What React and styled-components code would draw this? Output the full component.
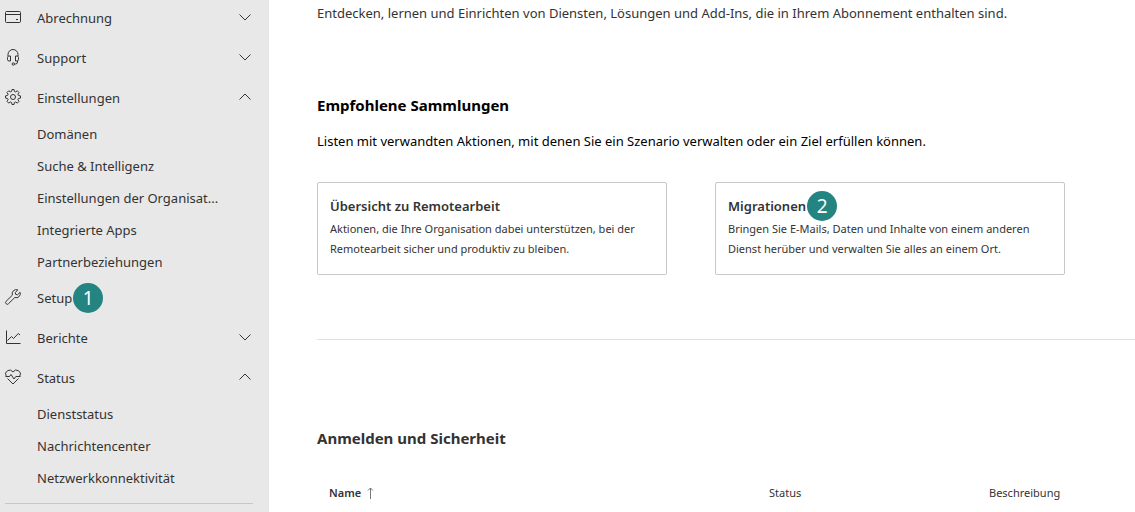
import styled, { createGlobalStyle, css } from "styled-components";

const GlobalStyle = createGlobalStyle`
  * {
    box-sizing: border-box;
  }
  html, body, #root {
    height: 100%;
  }
  body {
    margin: 0;
    overflow: hidden;
    background: #fff;
    color: #333;
    font-family: "Noto Sans", "Open Sans", sans-serif;
    font-size: 13px;
    line-height: 20px;
  }
  h2, h3, p, ul {
    margin: 0;
    padding: 0;
  }
`;

const icons = {
  billing: (
    <>
      <rect x="0.5" y="2.5" width="15" height="11" rx="1" />
      <path d="M0.5 5.5h15M11 10.5h2" />
    </>
  ),
  support: (
    <>
      <path d="M3 7V5.500a5 5 0 0 1 10 0V7" />
      <path d="M5.500 7v5H4a1.500 1.500 0 0 1-1.500-1.500v-2A1.500 1.500 0 0 1 4 7zM10.500 7v5H12a1.500 1.500 0 0 0 1.500-1.500v-2A1.500 1.500 0 0 0 12 7z" />
      <path d="M12.500 12v1a2 2 0 0 1-2 2H9.500" />
      <circle cx="8.300" cy="15" r="1.200" />
    </>
  ),
  settings: (
    <>
      <circle cx="8" cy="8" r="2.500" />
      <path d="M7 .5h2l.4 1.900 1.200.5 1.700-1.100 1.700 1.700-1.100 1.700.5 1.200 2.100.5v2.200l-2.100.4-.5 1.200 1.100 1.700-1.700 1.700-1.700-1.100-1.200.5L9 15.500H7l-.4-2-1.200-.5-1.700 1.100L2 12.400l1.100-1.700-.5-1.200L.5 9.100V6.900l2.100-.5.5-1.200L2 3.500l1.700-1.700 1.700 1.100 1.200-.5z" />
    </>
  ),
  setup: (
    <path d="M12.800 0.900a4.100 4.100 0 0 0-5.400 5.200L1.100 12.300a1.600 1.600 0 0 0 0 2.400 1.600 1.600 0 0 0 2.400 0l6.300-6.200a4.100 4.100 0 0 0 5.300-5.200l-2.600 2.500-1.800-.4-.4-1.900z" />
  ),
  reports: <path d="M1.500 1.500v13H15.500M2.500 11.500l4-4 2 2 4.800-5 1.700 1.500" />,
  health: (
    <>
      <path d="M1.200 7.200A3.900 3.900 0 0 1 8 3a3.900 3.900 0 0 1 6.800 4.200M2.500 9.500L8 15l5.500-5.500" />
      <path d="M0.500 7.500h4l1.500-2 3 4.500 1.800-2.500h4.700" />
    </>
  ),
  down: <path d="M2.500 5.500l5.500 5.500 5.500-5.500" />,
  up: <path d="M2.500 10.500L8 5l5.500 5.500" />,
  sort: <path d="M7.500 15V4M5 6.500L7.500 4 10 6.500" />,
};

const Icon = ({ name }) => (
  <Svg viewBox="0 1 16 16" aria-hidden="true">
    {icons[name]}
  </Svg>
);

const menu = [
  { label: "Abrechnung", icon: "billing", arrow: "down" },
  { label: "Support", icon: "support", arrow: "down" },
  {
    label: "Einstellungen",
    icon: "settings",
    arrow: "up",
    items: [
      "Domänen",
      "Suche & Intelligenz",
      "Einstellungen der Organisat...",
      "Integrierte Apps",
      "Partnerbeziehungen",
    ],
  },
  { label: "Setup", icon: "setup", step: 1 },
  { label: "Berichte", icon: "reports", arrow: "down" },
  {
    label: "Status",
    icon: "health",
    arrow: "up",
    items: ["Dienststatus", "Nachrichtencenter", "Netzwerkkonnektivität"],
  },
];

const MenuEntry = ({ label, icon, arrow, step, items }) => (
  <li>
    {arrow ? (
      <MenuButton type="button" aria-expanded={arrow === "up"}>
        <Icon name={icon} />
        <MenuLabel>{label}</MenuLabel>
        <Icon name={arrow} />
      </MenuButton>
    ) : (
      <MenuLink href="#setup">
        <Icon name={icon} />
        <Anchor>
          {label}
          {step && <Step>{step}</Step>}
        </Anchor>
      </MenuLink>
    )}
    {items && (
      <List>
        {items.map((item) => (
          <li key={item}>
            <SubLink href="#">{item}</SubLink>
          </li>
        ))}
      </List>
    )}
  </li>
);

const Collection = ({ title, text, step }) => (
  <Card href="#">
    <CardTitle>
      <Anchor>
        {title}
        {step && <Step>{step}</Step>}
      </Anchor>
    </CardTitle>
    <CardText>{text}</CardText>
  </Card>
);

export default function App() {
  return (
    <Page>
      <GlobalStyle />
      <Sidebar>
        <List>
          {menu.map((entry) => (
            <MenuEntry key={entry.label} {...entry} />
          ))}
        </List>
        <SidebarRule />
      </Sidebar>
      <Main>
        <Paragraph>
          Entdecken, lernen und Einrichten von Diensten, Lösungen und Add-Ins,
          die in Ihrem Abonnement enthalten sind.
        </Paragraph>
        <Collections>
          <Heading $dark>Empfohlene Sammlungen</Heading>
          <Paragraph $dark>
            Listen mit verwandten Aktionen, mit denen Sie ein Szenario verwalten
            oder ein Ziel erfüllen können.
          </Paragraph>
          <Cards>
            <Collection
              title="Übersicht zu Remotearbeit"
              text="Aktionen, die Ihre Organisation dabei unterstützen, bei der Remotearbeit sicher und produktiv zu bleiben."
            />
            <Collection
              title="Migrationen"
              step={2}
              text="Bringen Sie E-Mails, Daten und Inhalte von einem anderen Dienst herüber und verwalten Sie alles an einem Ort."
            />
          </Cards>
        </Collections>
        <Security>
          <Heading>Anmelden und Sicherheit</Heading>
          <Table>
            <thead>
              <tr>
                <Th $width="440px" $strong aria-sort="ascending">
                  <SortButton type="button">
                    Name
                    <Icon name="sort" />
                  </SortButton>
                </Th>
                <Th $width="220px">Status</Th>
                <Th>Beschreibung</Th>
              </tr>
            </thead>
          </Table>
        </Security>
      </Main>
    </Page>
  );
}

const Page = styled.div`
  display: flex;
  height: 100%;
  overflow: hidden;
`;
const Svg = styled.svg`
  flex: none;
  width: 16px;
  height: 16px;
  overflow: visible;
  fill: none;
  stroke: currentColor;
  stroke-width: 1;
`;
const Sidebar = styled.nav`
  flex: 0 0 269px;
  margin-top: -2px;
  background: #e8e8e8;
`;
const List = styled.ul`
  list-style: none;
`;
const menuRow = css`
  display: flex;
  align-items: center;
  gap: 16px;
  width: 100%;
  height: 40px;
  padding: 0 16px 0 5px;
  border: 0;
  background: transparent;
  color: #333;
  font: inherit;
  text-align: left;
  text-decoration: none;
  cursor: pointer;
`;
const MenuButton = styled.button`
  ${menuRow}
`;
const MenuLink = styled.a`
  ${menuRow}
`;
const MenuLabel = styled.span`
  flex: 1;
`;
const SubLink = styled.a`
  display: block;
  padding: 6px 16px 6px 37px;
  color: #333;
  text-decoration: none;
  white-space: nowrap;
`;
const SidebarRule = styled.hr`
  margin: 9px 16px 0 5px;
  border: 0;
  border-top: 1px solid #c8c8c8;
`;
const Anchor = styled.span`
  position: relative;
`;
/* Numbered marker laid over the end of a label */
const Step = styled.span`
  position: absolute;
  top: 50%;
  left: 100%;
  display: flex;
  align-items: center;
  justify-content: center;
  width: 30px;
  height: 30px;
  margin-left: 1px;
  border-radius: 50%;
  background: #248481;
  color: #fff;
  font-size: 19px;
  font-weight: 400;
  transform: translateY(-50%);
`;
const Main = styled.main`
  flex: 1;
  min-width: 0;
  padding: 3px 0 0 48px;
`;
const Paragraph = styled.p`
  color: ${(props) => (props.$dark ? "#000" : "#333")};
`;
const Heading = styled.h2`
  color: ${(props) => (props.$dark ? "#000" : "#333")};
  font-size: 15px;
  font-weight: 700;
  line-height: 24px;
`;
const Collections = styled.section`
  padding: 70px 0 64px;
  border-bottom: 1px solid #e1e1e1;

  ${Heading} {
    margin-bottom: 14px;
  }
`;
const Cards = styled.div`
  display: flex;
  gap: 48px;
  margin-top: 31px;
`;
const Card = styled.a`
  flex: 0 1 350px;
  padding: 13px 12px 15px;
  border: 1px solid #c8c8c8;
  border-radius: 2px;
  color: #333;
  text-decoration: none;
`;
const CardTitle = styled.h3`
  margin-bottom: 3px;
  font-size: 13px;
  font-weight: 600;
  line-height: 20px;
`;
const CardText = styled.p`
  font-size: 11px;
`;
const Security = styled.section`
  padding-top: 86px;
`;
const Table = styled.table`
  width: 100%;
  margin-top: 22px;
  border-collapse: collapse;
  table-layout: fixed;
`;
const Th = styled.th`
  width: ${(props) => props.$width || "auto"};
  height: 42px;
  padding: 0 12px;
  font-size: 11px;
  font-weight: ${(props) => (props.$strong ? 600 : 400)};
  text-align: left;
`;
const SortButton = styled.button`
  display: flex;
  align-items: center;
  gap: 2px;
  padding: 0;
  border: 0;
  background: transparent;
  color: inherit;
  font: inherit;
  cursor: pointer;

  ${Svg} {
    color: #777;
  }
`;
